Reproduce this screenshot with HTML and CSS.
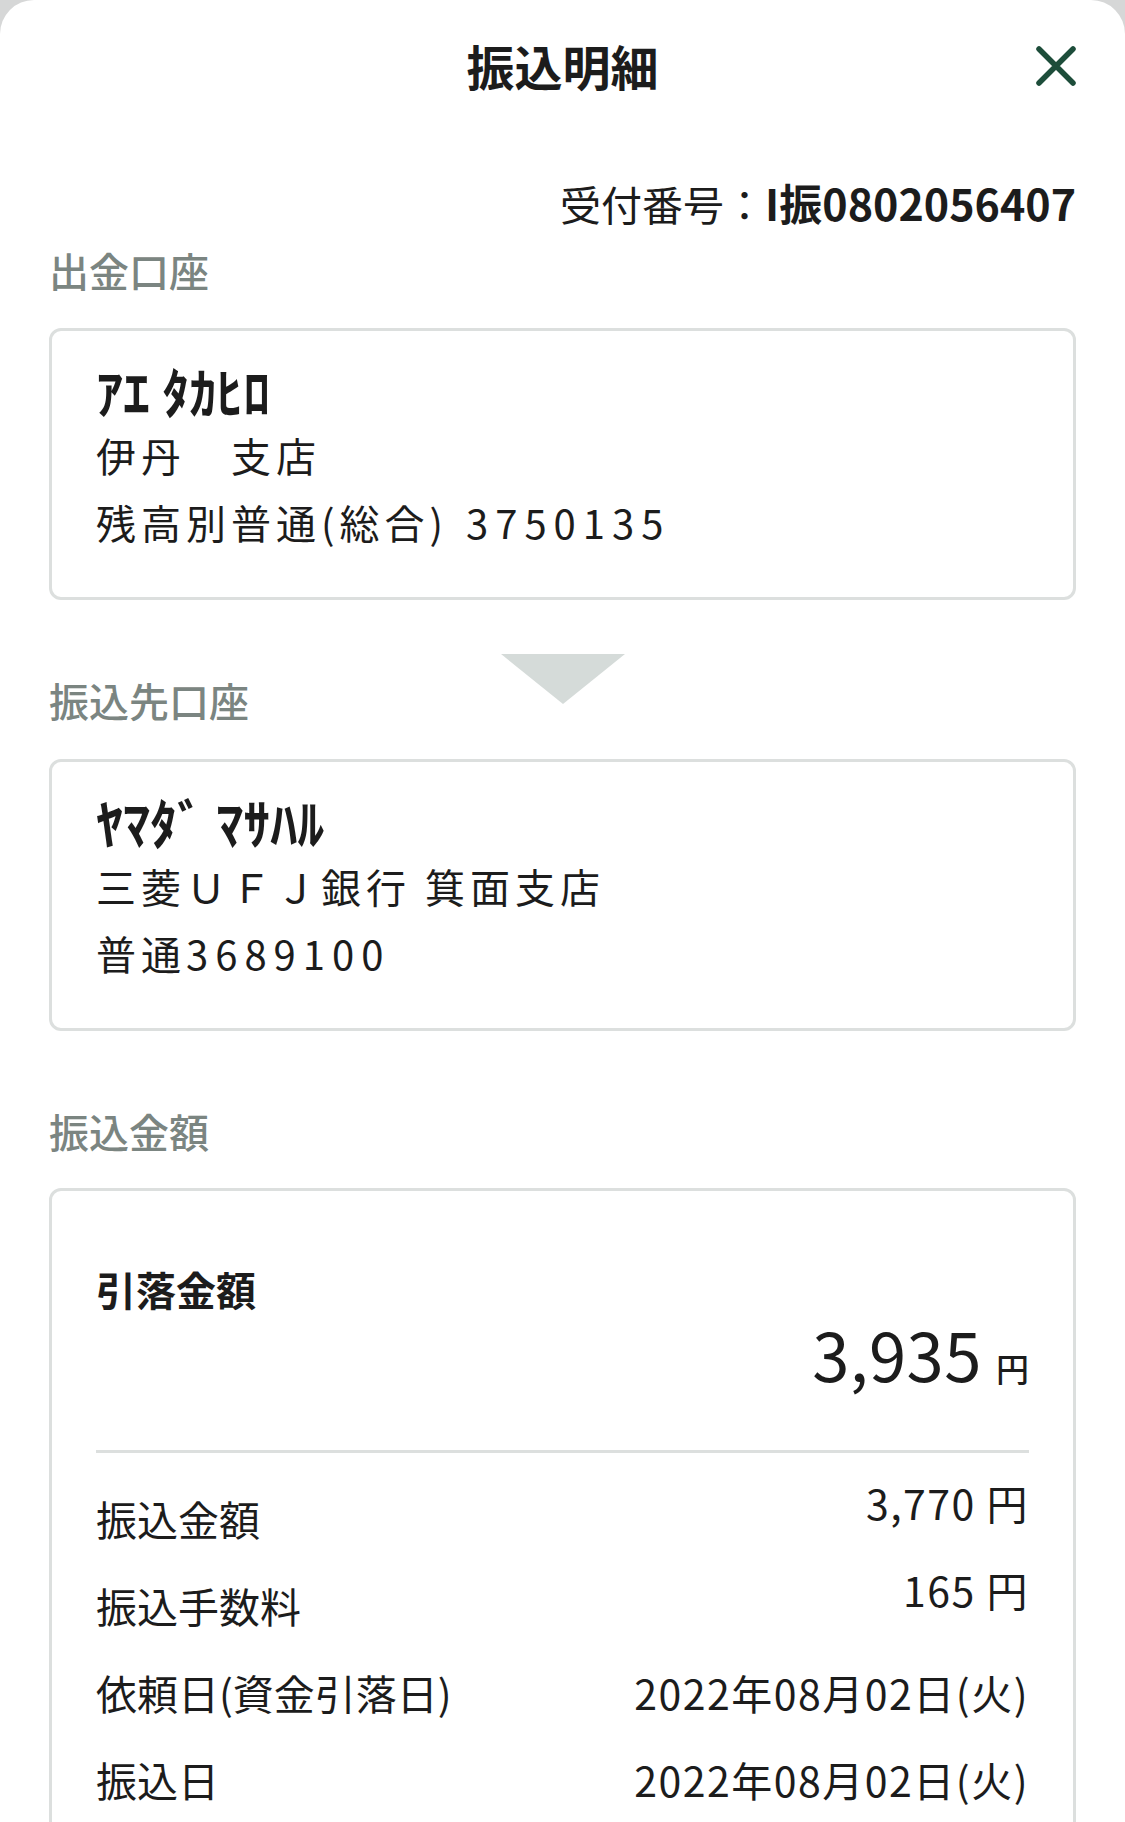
FILE: index.html
```html
<!DOCTYPE html>
<html lang="ja">
<head>
<meta charset="utf-8">
<title>振込明細</title>
<link rel="stylesheet" href="styles.css">
</head>
<body>
<div class="sheet">
  <header class="header">
    <h1 class="title">振込明細</h1>
    <button class="close" aria-label="閉じる">
      <svg viewBox="0 0 46 46" width="46" height="46"><path d="M6 6 L40 40 M40 6 L6 40" stroke="#1d4d3a" stroke-width="5.5" stroke-linecap="round" fill="none"/></svg>
    </button>
  </header>

  <p class="receipt">受付番号：<b>I振0802056407</b></p>

  <h2 class="label label-first">出金口座</h2>
  <section class="card account">
    <p class="name">ｱｴ ﾀｶﾋﾛ</p>
    <p class="line">伊丹　支店</p>
    <p class="line">残高別普通(総合) <span class="num num-gap">3750135</span></p>
  </section>

  <div class="label-row">
    <h2 class="label">振込先口座</h2>
    <span class="arrow"></span>
    <span></span>
  </div>
  <section class="card account">
    <p class="name">ﾔﾏﾀﾞ ﾏｻﾊﾙ</p>
    <p class="line">三菱ＵＦＪ銀行 箕面支店</p>
    <p class="line">普通<span class="num">3689100</span></p>
  </section>

  <h2 class="label label-amount">振込金額</h2>
  <section class="card amount">
    <p class="total-label">引落金額</p>
    <div class="total"><span class="total-num">3,935</span><span class="total-yen">円</span></div>
    <hr class="divider">
    <div class="row"><span class="key">振込金額</span><span class="val up">3,770 円</span></div>
    <div class="row"><span class="key">振込手数料</span><span class="val up">165 円</span></div>
    <div class="row"><span class="key">依頼日(資金引落日)</span><span class="val">2022年08月02日(火)</span></div>
    <div class="row"><span class="key">振込日</span><span class="val">2022年08月02日(火)</span></div>
  </section>
</div>
</body>
</html>
```

FILE: styles.css
```css
html, body {
  margin: 0;
  padding: 0;
}
body {
  background: #d6d7d7;
  font-family: "Noto Sans CJK JP", "Noto Sans", sans-serif;
  color: #1c1c1c;
  width: 1125px;
  height: 1822px;
  overflow: hidden;
}
.sheet {
  background: #ffffff;
  border-radius: 34px 34px 0 0;
  padding: 0 49px;
  height: 1822px;
  box-sizing: border-box;
}
p, h1, h2 {
  margin: 0;
}
.header {
  height: 134px;
  display: flex;
  align-items: center;
  justify-content: center;
  position: relative;
}
.title {
  font-size: 48px;
  font-weight: 700;
  line-height: 60px;
  margin-top: -4px;
  color: #1c1c1c;
}
.close {
  position: absolute;
  right: -3px;
  top: 43px;
  width: 46px;
  height: 46px;
  padding: 0;
  border: 0;
  background: none;
}
.close svg {
  display: block;
}
.receipt {
  margin-top: 38px;
  text-align: right;
  font-size: 41px;
  line-height: 60px;
  color: #1c1c1c;
}
.receipt b {
  font-weight: 700;
  font-size: 43px;
}
.label {
  font-size: 40px;
  font-weight: 500;
  line-height: 56px;
  color: #7b8581;
}
.label-first {
  margin-top: 9px;
}
.card {
  border: 3px solid #dcdfde;
  border-radius: 12px;
  margin-top: 30px;
}
.account {
  padding: 29px 44px 41px;
}
.name {
  font-size: 54px;
  font-weight: 700;
  line-height: 62px;
  letter-spacing: 0;
}
.line {
  font-size: 40px;
  line-height: 67px;
  letter-spacing: 5px;
}
.num {
  letter-spacing: 7px;
}
.num-gap {
  margin-left: 4px;
}
.label-row {
  margin-top: 54px;
  display: grid;
  grid-template-columns: 1fr auto 1fr;
  align-items: start;
}
.label-row .label {
  margin-top: 18px;
}
.label-row + .card {
  margin-top: 31px;
}
.arrow {
  width: 0;
  height: 0;
  border-left: 62px solid transparent;
  border-right: 62px solid transparent;
  border-top: 50px solid #d5dbd9;
}
.label-amount {
  margin-top: 72px;
}
.label-amount + .card {
  margin-top: 29px;
}
.amount {
  padding: 70px 44px 40px;
}
.total-label {
  font-size: 40px;
  font-weight: 700;
  line-height: 56px;
}
.total {
  margin-top: 6px;
  height: 60px;
  display: flex;
  justify-content: flex-end;
  align-items: baseline;
}
.total-num {
  font-size: 67px;
  font-weight: 400;
  line-height: 60px;
  letter-spacing: 0.5px;
}
.total-yen {
  font-size: 33px;
  font-weight: 500;
  line-height: 40px;
  margin-left: 14px;
}
.divider {
  margin: 67px 0 21px;
  border: 0;
  border-top: 3px solid #dcdfde;
  height: 0;
}
.row {
  height: 87px;
  display: flex;
  align-items: center;
  justify-content: space-between;
  font-size: 41px;
  line-height: 56px;
}
.val {
  letter-spacing: 1.5px;
}
.val.up {
  align-self: flex-start;
}
```
